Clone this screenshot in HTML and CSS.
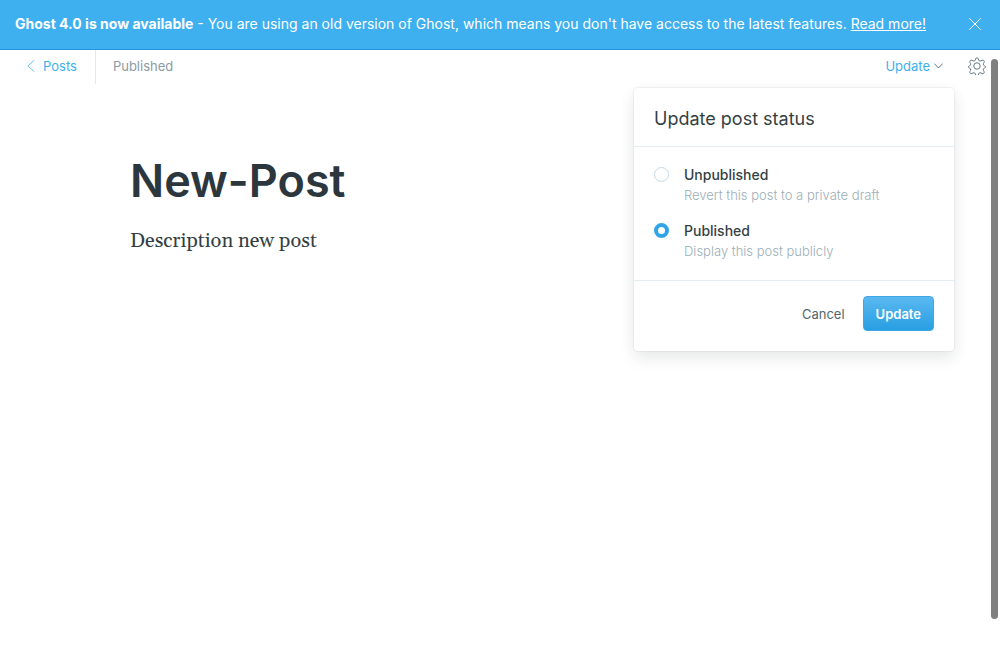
FILE: index.html
```html
<!DOCTYPE html>
<html lang="en">
<head>
<meta charset="utf-8">
<meta name="viewport" content="width=device-width, initial-scale=1">
<title>New-Post</title>
<link rel="stylesheet" href="styles.css">
</head>
<body>
<aside class="banner">
  <p class="banner-text"><strong>Ghost 4.0 is now available</strong> - You are using an old version of Ghost, which means you don't have access to the latest features. <a href="#">Read more!</a></p>
  <button class="icon-button banner-close" type="button" aria-label="Close">
    <svg width="12" height="12" viewBox="0 0 12 12" fill="none" stroke="currentColor" stroke-linecap="round"><path d="M.5.5l11 11M11.5.5l-11 11"/></svg>
  </button>
</aside>
<div class="editor">
  <header class="toolbar">
    <a class="back" href="#">
      <svg width="8" height="12" viewBox="0 0 8 12" fill="none" stroke="currentColor" stroke-width=".8" stroke-linecap="round" stroke-linejoin="round"><path d="M7 .5L.8 6 7 11.500"/></svg>
      Posts
    </a>
    <span class="state">Published</span>
    <div class="actions">
      <div class="publish">
        <button class="publish-toggle" type="button" aria-expanded="true">Update
          <svg width="9" height="6" viewBox="0 0 9 6" fill="none" stroke="#4d7187" stroke-width=".9" stroke-linecap="round" stroke-linejoin="round"><path d="M.5.8l4 4.200 4-4.200"/></svg>
        </button>
        <form class="menu">
          <h2 class="menu-title">Update post status</h2>
          <div class="options">
            <label class="option">
              <input class="radio" type="radio" name="status">
              <span class="option-text"><span class="option-name">Unpublished</span><span class="option-note">Revert this post to a private draft</span></span>
            </label>
            <label class="option">
              <input class="radio" type="radio" name="status" checked>
              <span class="option-text"><span class="option-name">Published</span><span class="option-note">Display this post publicly</span></span>
            </label>
          </div>
          <footer class="menu-footer">
            <button class="cancel" type="button">Cancel</button>
            <button class="submit" type="button">Update</button>
          </footer>
        </form>
      </div>
      <button class="icon-button settings" type="button" aria-label="Settings">
        <svg width="18" height="18" viewBox="0 0 24 24" fill="none" stroke="currentColor" stroke-width="1.300" stroke-linejoin="round"><circle cx="12" cy="12" r="4.300"/><path d="M13.700 2.300l.5 1.600a2.200 2.200 0 0 0 3 1.300l1.500-.8a2 2 0 0 1 2.700 2.700l-.8 1.500a2.200 2.200 0 0 0 1.300 3l.5.200a1.500 1.500 0 0 1 0 2.800l-.5.200a2.200 2.200 0 0 0-1.300 3l.8 1.500a2 2 0 0 1-2.700 2.700l-1.500-.8a2.200 2.200 0 0 0-3 1.300l-.5 1.600a1.800 1.800 0 0 1-3.400 0l-.5-1.600a2.200 2.200 0 0 0-3-1.300l-1.500.8a2 2 0 0 1-2.700-2.700l.8-1.500a2.200 2.200 0 0 0-1.300-3l-.5-.200a1.500 1.500 0 0 1 0-2.800l.5-.200a2.200 2.200 0 0 0 1.300-3l-.8-1.500a2 2 0 0 1 2.700-2.700l1.500.8a2.200 2.200 0 0 0 3-1.300l.5-1.600a1.800 1.800 0 0 1 3.400 0z"/></svg>
      </button>
    </div>
  </header>
  <main class="post">
    <h1 class="post-title">New-Post</h1>
    <p class="post-body">Description new post</p>
  </main>
  <div class="scrollbar"></div>
</div>
</body>
</html>
```
FILE: styles.css
```css
* {
  box-sizing: border-box;
}

body {
  margin: 0;
  min-height: 100vh;
  display: flex;
  flex-direction: column;
  background: #fff;
  color: #343f44;
  font: 14px/20px Inter, "Liberation Sans", sans-serif;
}

h1, h2, p {
  margin: 0;
}

a {
  color: inherit;
}

button {
  margin: 0;
  padding: 0;
  border: 0;
  background: none;
  color: inherit;
  font: inherit;
  cursor: pointer;
}

svg {
  display: block;
}

.banner {
  display: flex;
  align-items: center;
  justify-content: space-between;
  min-height: 50px;
  padding: 0 15px 2px;
  border-bottom: 1px solid #1f97dd;
  background: #3eb0ef;
  color: #fff;
}

.banner-text {
  font-size: 14px;
}

.banner-text strong {
  font-weight: 700;
}

.icon-button {
  display: flex;
  align-items: center;
  justify-content: center;
}

.banner-close {
  width: 20px;
  height: 20px;
}

.editor {
  position: relative;
  flex: 1;
}

.toolbar {
  display: flex;
  align-items: stretch;
  min-height: 34px;
  padding: 0 14px 0 27px;
  font-size: 13px;
}

.back {
  display: flex;
  align-items: center;
  gap: 8px;
  padding: 0 18px 2px 0;
  border-right: 1px solid #dfe9f1;
  color: #3eb0ef;
  text-decoration: none;
}

.state {
  align-self: center;
  padding: 0 17px 3px;
  color: #8a9ba5;
}

.actions {
  display: flex;
  align-items: center;
  gap: 25px;
  margin-left: auto;
  padding-bottom: 2px;
}

.publish {
  position: relative;
}

.publish-toggle {
  display: flex;
  align-items: center;
  gap: 4px;
  color: #3eb0ef;
  font-size: 13px;
}

.settings {
  width: 18px;
  height: 20px;
  color: #60757f;
}

.menu {
  position: absolute;
  top: 32px;
  right: -11px;
  z-index: 2;
  width: 320px;
  border-radius: 4px;
  background: #fff;
  box-shadow: 0 0 0 1px rgba(99, 114, 130, .08), 0 8px 16px rgba(27, 39, 51, .08), 0 2px 18px rgba(27, 39, 51, .04);
}

.menu-title {
  padding: 19px 20px 15px;
  border-bottom: 1px solid #e3edf4;
  font-size: 18px;
  line-height: 24px;
  font-weight: 400;
}

.options {
  display: grid;
  gap: 16px;
  padding: 18px 20px 19px;
  border-bottom: 1px solid #e3edf4;
}

.option {
  display: flex;
  gap: 15px;
}

.option-text {
  display: grid;
}

.option-name {
  font-size: 14px;
  font-weight: 500;
}

.option-note {
  color: #9baeb8;
  font-size: 13px;
  font-weight: 300;
}

.radio {
  flex: none;
  width: 15px;
  height: 15px;
  margin: 2px 0 0;
  appearance: none;
  border: 1px solid #c5d9e8;
  border-radius: 50%;
  background: #fff;
}

.radio:checked {
  border: 4px solid #2fa5e8;
}

.menu-footer {
  display: flex;
  align-items: center;
  justify-content: flex-end;
  gap: 18px;
  padding: 15px 20px 20px;
}

.cancel {
  color: #54666d;
  font-size: 13px;
}

.submit {
  height: 35px;
  padding: 0 12px;
  border: 1px solid #3ea7e4;
  border-radius: 4px;
  background: linear-gradient(#5ab8f0, #289fe2);
  color: #fff;
  font-size: 13px;
  font-weight: 600;
}

.post {
  max-width: 1000px;
  margin: 0 auto;
  padding: 68px 130px;
}

.post-title {
  color: #2b373d;
  font-size: 45px;
  line-height: 58px;
  font-weight: 600;
}

.post-body {
  margin-top: 16px;
  font-family: Gelasio, Georgia, "Liberation Serif", serif;
  font-size: 20px;
  line-height: 30px;
}

.scrollbar {
  position: absolute;
  top: 9px;
  right: 2px;
  bottom: 41px;
  width: 7px;
  border-radius: 4px;
  background: #808080;
}
```
